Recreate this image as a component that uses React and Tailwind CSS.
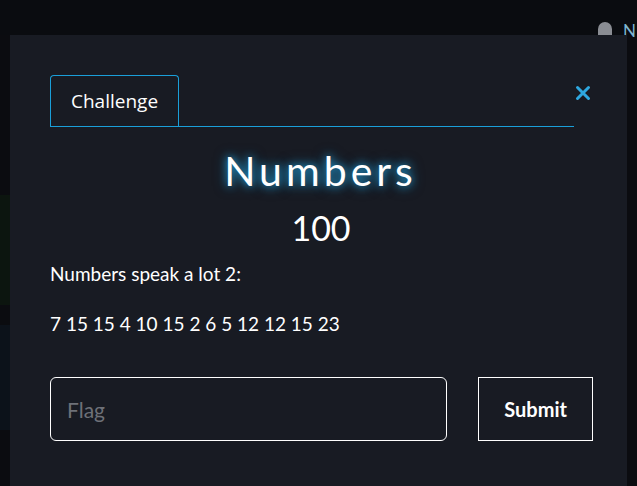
import { useState } from "react";

export default function App() {
  const [flag, setFlag] = useState("");

  return (
    <main
      className="relative w-[637px] h-[486px] overflow-hidden bg-[#0b0c10]"
      style={{ fontFamily: "Lato, 'Open Sans', sans-serif" }}
    >
      {/* page behind the modal */}
      <div className="absolute top-0 left-0 right-0 h-[35px] bg-[#0a0c10]" />
      <div className="absolute top-[22px] left-[598px] flex items-start gap-[11px]">
        <div className="w-[14px] h-[14px] rounded-t-full bg-[#8a8d93]" />
        <span className="text-[17px] leading-none text-[#7fb6d0]">N</span>
      </div>
      <div className="absolute left-0 top-[195px] w-[10px] h-[110px] bg-[#0c150f]" />
      <div className="absolute left-0 top-[325px] w-[10px] h-[105px] bg-[#0c121a]" />

      {/* modal */}
      <div className="absolute left-[10px] top-[35px] w-[617px] h-[460px] bg-[#181b23] text-white">
        <div className="pl-10 pr-[36px] pt-10 flex items-end">
          <div className="flex-1 flex border-b border-[#1a9fd9]">
            <button
              className="h-[52px] px-[20px] border border-b-0 border-[#1a9fd9] rounded-t-[4px] text-[19px] text-white -mb-px pb-px"
              style={{ fontFamily: "'Open Sans', sans-serif" }}
            >
              Challenge
            </button>
          </div>
          <button className="ml-[1px] mb-[26px] text-[#2ea8e0]">
            <svg width="16" height="16" viewBox="0 0 16 16">
              <path
                d="M2.5 2.5 L13.5 13.5 M13.5 2.5 L2.5 13.5"
                stroke="#2ea8e0"
                strokeWidth="3"
                strokeLinecap="round"
              />
            </svg>
          </button>
        </div>

        <div className="text-center mt-[20px]">
          <h1
            className="text-[41px] leading-[48px] tracking-[4px] text-white pl-[4px]"
            style={{ textShadow: "0 0 8px #1fa3e0, 0 0 14px rgba(31,163,224,0.5)" }}
          >
            Numbers
          </h1>
          <p className="text-[34px] leading-[40px] mt-[13px] pl-[5px]">100</p>
        </div>

        <div className="px-10 mt-[14px] text-[19px] leading-[24px]">
          <p>Numbers speak a lot 2:</p>
          <p className="mt-[26px]">7 15 15 4 10 15 2 6 5 12 12 15 23</p>
        </div>

        <form className="pl-10 pr-[34px] mt-[41px] flex gap-[31px]" onSubmit={(e) => e.preventDefault()}>
          <input
            placeholder="Flag"
            value={flag}
            onChange={(e) => setFlag(e.target.value)}
            className="w-[398px] h-[64px] bg-transparent border border-white rounded-[6px] px-4 text-[21px] text-white placeholder:text-[#6e7178] outline-none"
          />
          <button
            type="submit"
            className="w-[115px] h-[64px] border border-white text-[20px] font-bold text-white"
          >
            Submit
          </button>
        </form>
      </div>
    </main>
  );
}
